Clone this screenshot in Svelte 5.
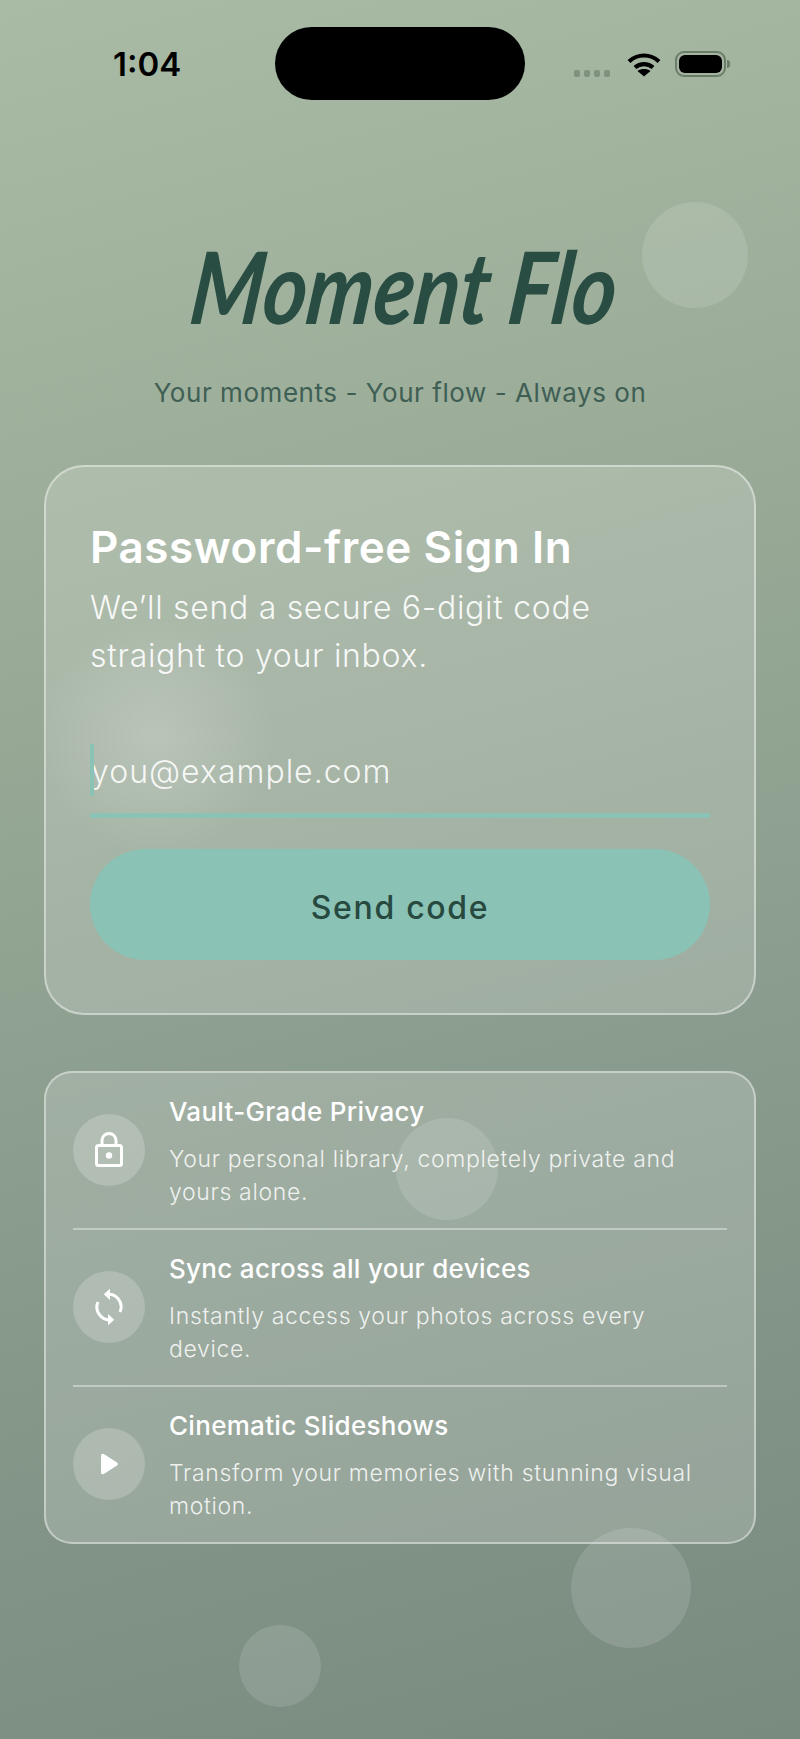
<script>
	const features = [
		{ icon: 'lock', title: 'Vault-Grade Privacy', text: 'Your personal library, completely private and yours alone.' },
		{ icon: 'sync', title: 'Sync across all your devices', text: 'Instantly access your photos across every device.' },
		{ icon: 'play', title: 'Cinematic Slideshows', text: 'Transform your memories with stunning visual motion.' }
	];

	const bubbles = [
		{ x: 642, y: 202, size: 106 },
		{ x: 396, y: 1118, size: 102 },
		{ x: 571, y: 1528, size: 120 },
		{ x: 239, y: 1625, size: 82 }
	];
</script>

<div class="page">
	{#each bubbles as b}
		<span class="bubble" style="left: {b.x}px; top: {b.y}px; width: {b.size}px; height: {b.size}px"></span>
	{/each}

	<header class="status">
		<span class="time">1:04</span>
		<span class="island"></span>
		<div class="indicators">
			<span class="signal"><i></i><i></i><i></i><i></i></span>
			<svg class="wifi" width="34" height="25" viewBox="0 0 34 25" fill="none" stroke="#000" stroke-width="4.2">
				<path d="M2 9.5C10.5 1.5 23.5 1.5 32 9.5" />
				<path d="M8 15.5C13 11 21 11 26 15.5" />
				<path d="M17 24.5L10.5 19C14 16.4 20 16.4 23.5 19Z" fill="#000" stroke="none" />
			</svg>
			<span class="battery"><span class="level"></span></span>
			<span class="cap"></span>
		</div>
	</header>

	<div class="brand">
		<h1>Moment Flo</h1>
		<p>Your moments - Your flow - Always on</p>
	</div>

	<section class="card signin">
		<span class="glow"></span>
		<h2>Password-free Sign In</h2>
		<p class="lead">We’ll send a secure 6-digit code straight to your inbox.</p>
		<div class="field">
			<span class="caret"></span>
			<input type="email" placeholder="you@example.com" />
		</div>
		<button>Send code</button>
	</section>

	<section class="card features">
		{#each features as f}
			<div class="feature">
				<span class="icon">
					{#if f.icon === 'lock'}
						<svg width="32" height="38" viewBox="0 0 32 38" fill="none" stroke="#fff" stroke-width="3" stroke-linejoin="round">
							<rect x="3.5" y="14.5" width="25" height="20" rx="2" />
							<path d="M9 14.5V9.5a7 7 0 0 1 14 0V14.5" />
							<circle cx="16" cy="24.5" r="3.2" fill="#fff" stroke="none" />
						</svg>
					{:else if f.icon === 'sync'}
						<svg width="30" height="38" viewBox="0 0 30 38" fill="none" stroke="#fff" stroke-width="3">
							<path d="M12 6.5A12.6 12.6 0 0 1 26 24" />
							<path d="M18 31.5A12.6 12.6 0 0 1 4 14" />
							<path d="M16 0.8V12L9.8 6.3Z" fill="#fff" stroke="none" />
							<path d="M14 37.2V26L20.2 31.7Z" fill="#fff" stroke="none" />
						</svg>
					{:else}
						<svg width="20" height="24" viewBox="0 0 20 24">
							<path d="M2 3.5C2 2 3.5 1.2 4.8 2L18 10.5C19.2 11.3 19.2 12.7 18 13.5L4.8 22C3.5 22.8 2 22 2 20.5Z" fill="#fff" />
						</svg>
					{/if}
				</span>
				<div class="copy">
					<h3>{f.title}</h3>
					<p>{f.text}</p>
				</div>
			</div>
		{/each}
	</section>
</div>

<style>
	:global(body) {
		margin: 0;
	}

	.page {
		position: relative;
		box-sizing: border-box;
		min-height: 1739px;
		padding: 27px 44px 0;
		overflow: hidden;
		background: linear-gradient(165deg, #a9bba5 0%, #9bac98 30%, #8a9c8d 62%, #798a7f 100%);
		font-family: Inter, 'Liberation Sans', sans-serif;
	}

	.bubble {
		position: absolute;
		border-radius: 50%;
		background: rgba(255, 255, 255, 0.13);
		z-index: 2;
		pointer-events: none;
	}

	.status {
		display: grid;
		grid-template-columns: 1fr 250px 1fr;
		align-items: center;
		height: 73px;
		margin: 0 -44px;
	}

	.time {
		justify-self: start;
		margin: 2px 0 0 113px;
		font-size: 33px;
		font-weight: 600;
		line-height: 1;
		color: #000;
	}

	.island {
		height: 73px;
		border-radius: 37px;
		background: #000;
	}

	.indicators {
		display: flex;
		align-items: center;
		margin-left: 49px;
	}

	.signal {
		display: flex;
		gap: 4px;
		margin: 20px 17px 0 0;
	}

	.signal i {
		width: 6px;
		height: 7px;
		border-radius: 2px;
		background: #7f927f;
	}

	.wifi {
		margin-top: 1px;
	}

	.battery {
		box-sizing: border-box;
		display: flex;
		width: 51px;
		height: 26px;
		margin-left: 14px;
		padding: 2px;
		border: 2px solid #6b7d68;
		border-radius: 9px;
	}

	.level {
		flex: 1;
		border-radius: 6px;
		background: #000;
	}

	.cap {
		width: 3px;
		height: 8px;
		margin-left: 1px;
		border-radius: 0 4px 4px 0;
		background: #6b7d68;
	}

	.brand {
		text-align: center;
	}

	h1 {
		margin: 125px 0 0;
		font-family: Lato, sans-serif;
		font-size: 100px;
		font-style: italic;
		font-weight: 700;
		line-height: 120px;
		color: #294d43;
		/* no brush script installed, so squeeze Lato to the logo's width */
		transform: translateX(5px) scaleX(0.84) skewX(-8deg);
	}

	.brand p {
		margin: 30px 0 0;
		font-size: 26px;
		line-height: 36px;
		letter-spacing: 0.55px;
		color: #3f5f55;
	}

	.card {
		position: relative;
		box-sizing: border-box;
		border: 2px solid rgba(255, 255, 255, 0.42);
		background: rgba(255, 255, 255, 0.18);
	}

	.signin {
		height: 550px;
		margin-top: 54px;
		padding: 54px 44px 0;
		border-radius: 40px;
		overflow: hidden;
	}

	.glow {
		position: absolute;
		left: -10px;
		top: 150px;
		width: 240px;
		height: 240px;
		border-radius: 50%;
		background: radial-gradient(circle, rgba(255, 255, 255, 0.2), rgba(255, 255, 255, 0) 70%);
	}

	h2 {
		position: relative;
		margin: 0;
		font-size: 44px;
		font-weight: 600;
		line-height: 52px;
		letter-spacing: 0.55px;
		color: #fff;
	}

	.lead {
		position: relative;
		margin: 11px 0 0;
		font-size: 32px;
		font-weight: 300;
		line-height: 48px;
		letter-spacing: 0.7px;
		color: rgba(255, 255, 255, 0.92);
	}

	.field {
		position: relative;
		margin-top: 49px;
		border-bottom: 5px solid #8ac2b5;
	}

	.caret {
		position: absolute;
		left: 0;
		top: 15px;
		width: 4px;
		height: 52px;
		background: #8ac2b5;
	}

	input {
		box-sizing: border-box;
		display: block;
		width: 100%;
		height: 84px;
		padding: 0 0 0 1px;
		border: 0;
		outline: 0;
		background: transparent;
		font: 300 32px Inter, sans-serif;
		letter-spacing: 1px;
		color: #fff;
	}

	input::placeholder {
		color: rgba(255, 255, 255, 0.9);
		opacity: 1;
	}

	button {
		position: relative;
		display: block;
		width: 100%;
		height: 111px;
		margin-top: 31px;
		padding: 6px 0 0;
		border: 0;
		border-radius: 56px;
		background: #8ac2b5;
		font: 500 32px Inter, sans-serif;
		letter-spacing: 1.7px;
		color: #27493f;
	}

	.features {
		height: 473px;
		margin-top: 56px;
		padding: 0 27px;
		border-radius: 28px;
	}

	.feature {
		box-sizing: border-box;
		display: flex;
		align-items: center;
		gap: 24px;
		height: 157px;
		border-bottom: 2px solid rgba(255, 255, 255, 0.38);
	}

	.feature:last-child {
		height: 155px;
		border-bottom: 0;
	}

	.icon {
		flex: none;
		display: flex;
		align-items: center;
		justify-content: center;
		width: 72px;
		height: 72px;
		margin-top: -1px;
		border-radius: 50%;
		background: rgba(255, 255, 255, 0.2);
	}

	.copy {
		padding-top: 3px;
	}

	h3 {
		margin: 0;
		font-size: 26px;
		font-weight: 500;
		line-height: 34px;
		letter-spacing: 0.3px;
		color: #fff;
	}

	.copy p {
		margin: 14px 0 0;
		font-size: 23px;
		font-weight: 300;
		line-height: 33.5px;
		letter-spacing: 0.66px;
		color: rgba(255, 255, 255, 0.85);
	}
</style>
